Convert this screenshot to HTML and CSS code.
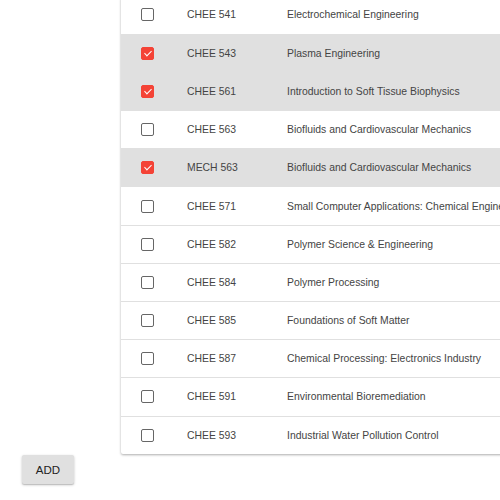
FILE: index.html
```html
<!DOCTYPE html>
<html>
<head>
<meta charset="utf-8">
<link rel="stylesheet" href="styles.css">
</head>
<body>
<div class="page">
  <div class="card">
    <table class="courses">
      <tbody>
        <tr><td class="cb"><span class="box"></span></td><td class="code">CHEE 541</td><td class="name">Electrochemical Engineering</td></tr>
        <tr class="sel"><td class="cb"><span class="box on"></span></td><td class="code">CHEE 543</td><td class="name">Plasma Engineering</td></tr>
        <tr class="sel"><td class="cb"><span class="box on"></span></td><td class="code">CHEE 561</td><td class="name">Introduction to Soft Tissue Biophysics</td></tr>
        <tr><td class="cb"><span class="box"></span></td><td class="code">CHEE 563</td><td class="name">Biofluids and Cardiovascular Mechanics</td></tr>
        <tr class="sel"><td class="cb"><span class="box on"></span></td><td class="code">MECH 563</td><td class="name">Biofluids and Cardiovascular Mechanics</td></tr>
        <tr><td class="cb"><span class="box"></span></td><td class="code">CHEE 571</td><td class="name">Small Computer Applications: Chemical Engineering</td></tr>
        <tr><td class="cb"><span class="box"></span></td><td class="code">CHEE 582</td><td class="name">Polymer Science &amp; Engineering</td></tr>
        <tr><td class="cb"><span class="box"></span></td><td class="code">CHEE 584</td><td class="name">Polymer Processing</td></tr>
        <tr><td class="cb"><span class="box"></span></td><td class="code">CHEE 585</td><td class="name">Foundations of Soft Matter</td></tr>
        <tr><td class="cb"><span class="box"></span></td><td class="code">CHEE 587</td><td class="name">Chemical Processing: Electronics Industry</td></tr>
        <tr><td class="cb"><span class="box"></span></td><td class="code">CHEE 591</td><td class="name">Environmental Bioremediation</td></tr>
        <tr class="last"><td class="cb"><span class="box"></span></td><td class="code">CHEE 593</td><td class="name">Industrial Water Pollution Control</td></tr>
      </tbody>
    </table>
  </div>
  <div class="actions">
    <button class="add">ADD</button>
  </div>
</div>
</body>
</html>
```

FILE: styles.css
```css
html, body {
  margin: 0;
  padding: 0;
  background: #fff;
  overflow: hidden;
}
body {
  font-family: "Liberation Sans", Arial, sans-serif;
  color: #444;
}
.page {
  width: 500px;
  height: 500px;
  overflow: hidden;
}
.card {
  margin-top: -4px;
  margin-left: 121px;
  width: 520px;
  background: #fff;
  box-shadow: 0 1px 3px rgba(0,0,0,0.2), 0 1px 2px rgba(0,0,0,0.14);
  border-radius: 2px;
}
.courses {
  border-collapse: collapse;
  width: 100%;
  font-size: 10.4px;
}
.courses tr {
  height: 38.2px;
  border-bottom: 1px solid #e0e0e0;
}
.courses tr.last {
  border-bottom: none;
}
.courses tr.sel {
  background: #e0e0e0;
}
.courses td {
  padding: 0;
  vertical-align: middle;
  white-space: nowrap;
}
.cb {
  width: 66px;
  padding-left: 20px !important;
  box-sizing: border-box;
}
.code {
  width: 100px;
}
.box {
  display: block;
  width: 11px;
  height: 11px;
  border: 1px solid #666;
  border-radius: 2px;
  background: #fff;
}
.box.on {
  background: #f44336;
  border-color: #f44336;
  position: relative;
}
.box.on::after {
  content: "";
  position: absolute;
  left: 3.5px;
  top: 1px;
  width: 3px;
  height: 6px;
  border-right: 1.5px solid #fff;
  border-bottom: 1.5px solid #fff;
  transform: rotate(45deg);
}
.actions {
  padding-left: 22px;
  padding-top: 1px;
}
.add {
  width: 52px;
  height: 29px;
  border: none;
  border-radius: 2px;
  background: #e0e0e0;
  color: #222;
  font-family: "Liberation Sans", Arial, sans-serif;
  font-size: 11.5px;
  box-shadow: 0 1px 3px rgba(0,0,0,0.2), 0 1px 1px rgba(0,0,0,0.14);
  padding: 0;
}
```
